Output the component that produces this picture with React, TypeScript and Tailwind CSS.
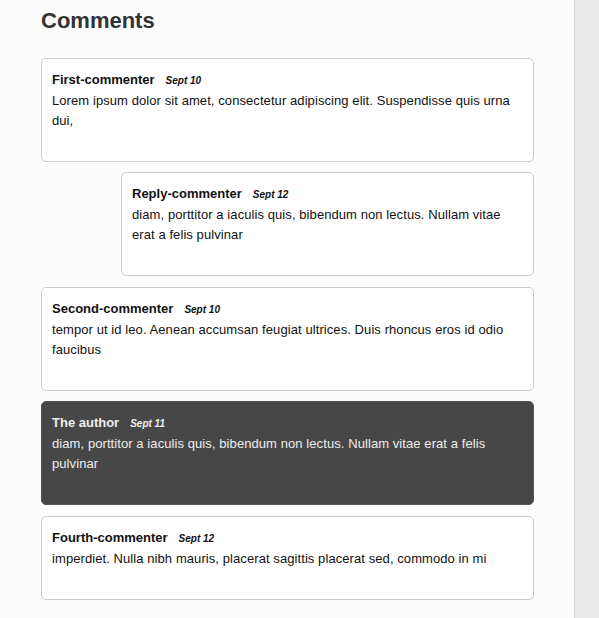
type Comment = {
  name: string;
  date: string;
  body: string;
  reply?: boolean;
  author?: boolean;
};

const comments: Comment[] = [
  {
    name: "First-commenter",
    date: "Sept 10",
    body: "Lorem ipsum dolor sit amet, consectetur adipiscing elit. Suspendisse quis urna dui,",
  },
  {
    name: "Reply-commenter",
    date: "Sept 12",
    body: "diam, porttitor a iaculis quis, bibendum non lectus. Nullam vitae erat a felis pulvinar",
    reply: true,
  },
  {
    name: "Second-commenter",
    date: "Sept 10",
    body: "tempor ut id leo. Aenean accumsan feugiat ultrices. Duis rhoncus eros id odio faucibus",
  },
  {
    name: "The author",
    date: "Sept 11",
    body: "diam, porttitor a iaculis quis, bibendum non lectus. Nullam vitae erat a felis pulvinar",
    author: true,
  },
  {
    name: "Fourth-commenter",
    date: "Sept 12",
    body: "imperdiet. Nulla nibh mauris, placerat sagittis placerat sed, commodo in mi",
  },
];

function CommentCard({ c, nudge }: { c: Comment; nudge: boolean }) {
  return (
    <div
      className={
        "rounded-[5px] border px-[10px] pt-[11px] pb-[10px] " +
        (nudge ? "mt-[1px] " : "") +
        (c.reply ? "ml-[80px] " : "") +
        (c.author
          ? "bg-[#474747] border-[#555] text-[#eeeeee]"
          : "bg-white border-[#cccccc] text-[#111]")
      }
    >
      <div className="flex items-baseline leading-[20px]">
        <span className="text-[13px] font-bold">{c.name}</span>
        <span className="ml-[11px] text-[10px] font-bold italic">{c.date}</span>
      </div>
      <p className="text-[13px] leading-[20px] tracking-[0.08px] mb-[20px]">{c.body}</p>
    </div>
  );
}

export default function App() {
  return (
    <div className="min-h-screen flex bg-[#ebebeb] font-['Liberation_Sans',Arial,sans-serif]">
      {/* Main column */}
      <div className="w-[575px] min-h-screen bg-[#fcfcfc] border-r border-[#d4d4d4] pl-[41px] pr-[40px] pt-[8px]">
        <h2 className="text-[22px] leading-[26px] font-bold text-[#333] mb-[24px]">Comments</h2>
        <div className="flex flex-col gap-[10px]">
          {comments.map((c, i) => (
            <CommentCard key={i} c={c} nudge={i === 2 || i === 4} />
          ))}
        </div>
      </div>
    </div>
  );
}
